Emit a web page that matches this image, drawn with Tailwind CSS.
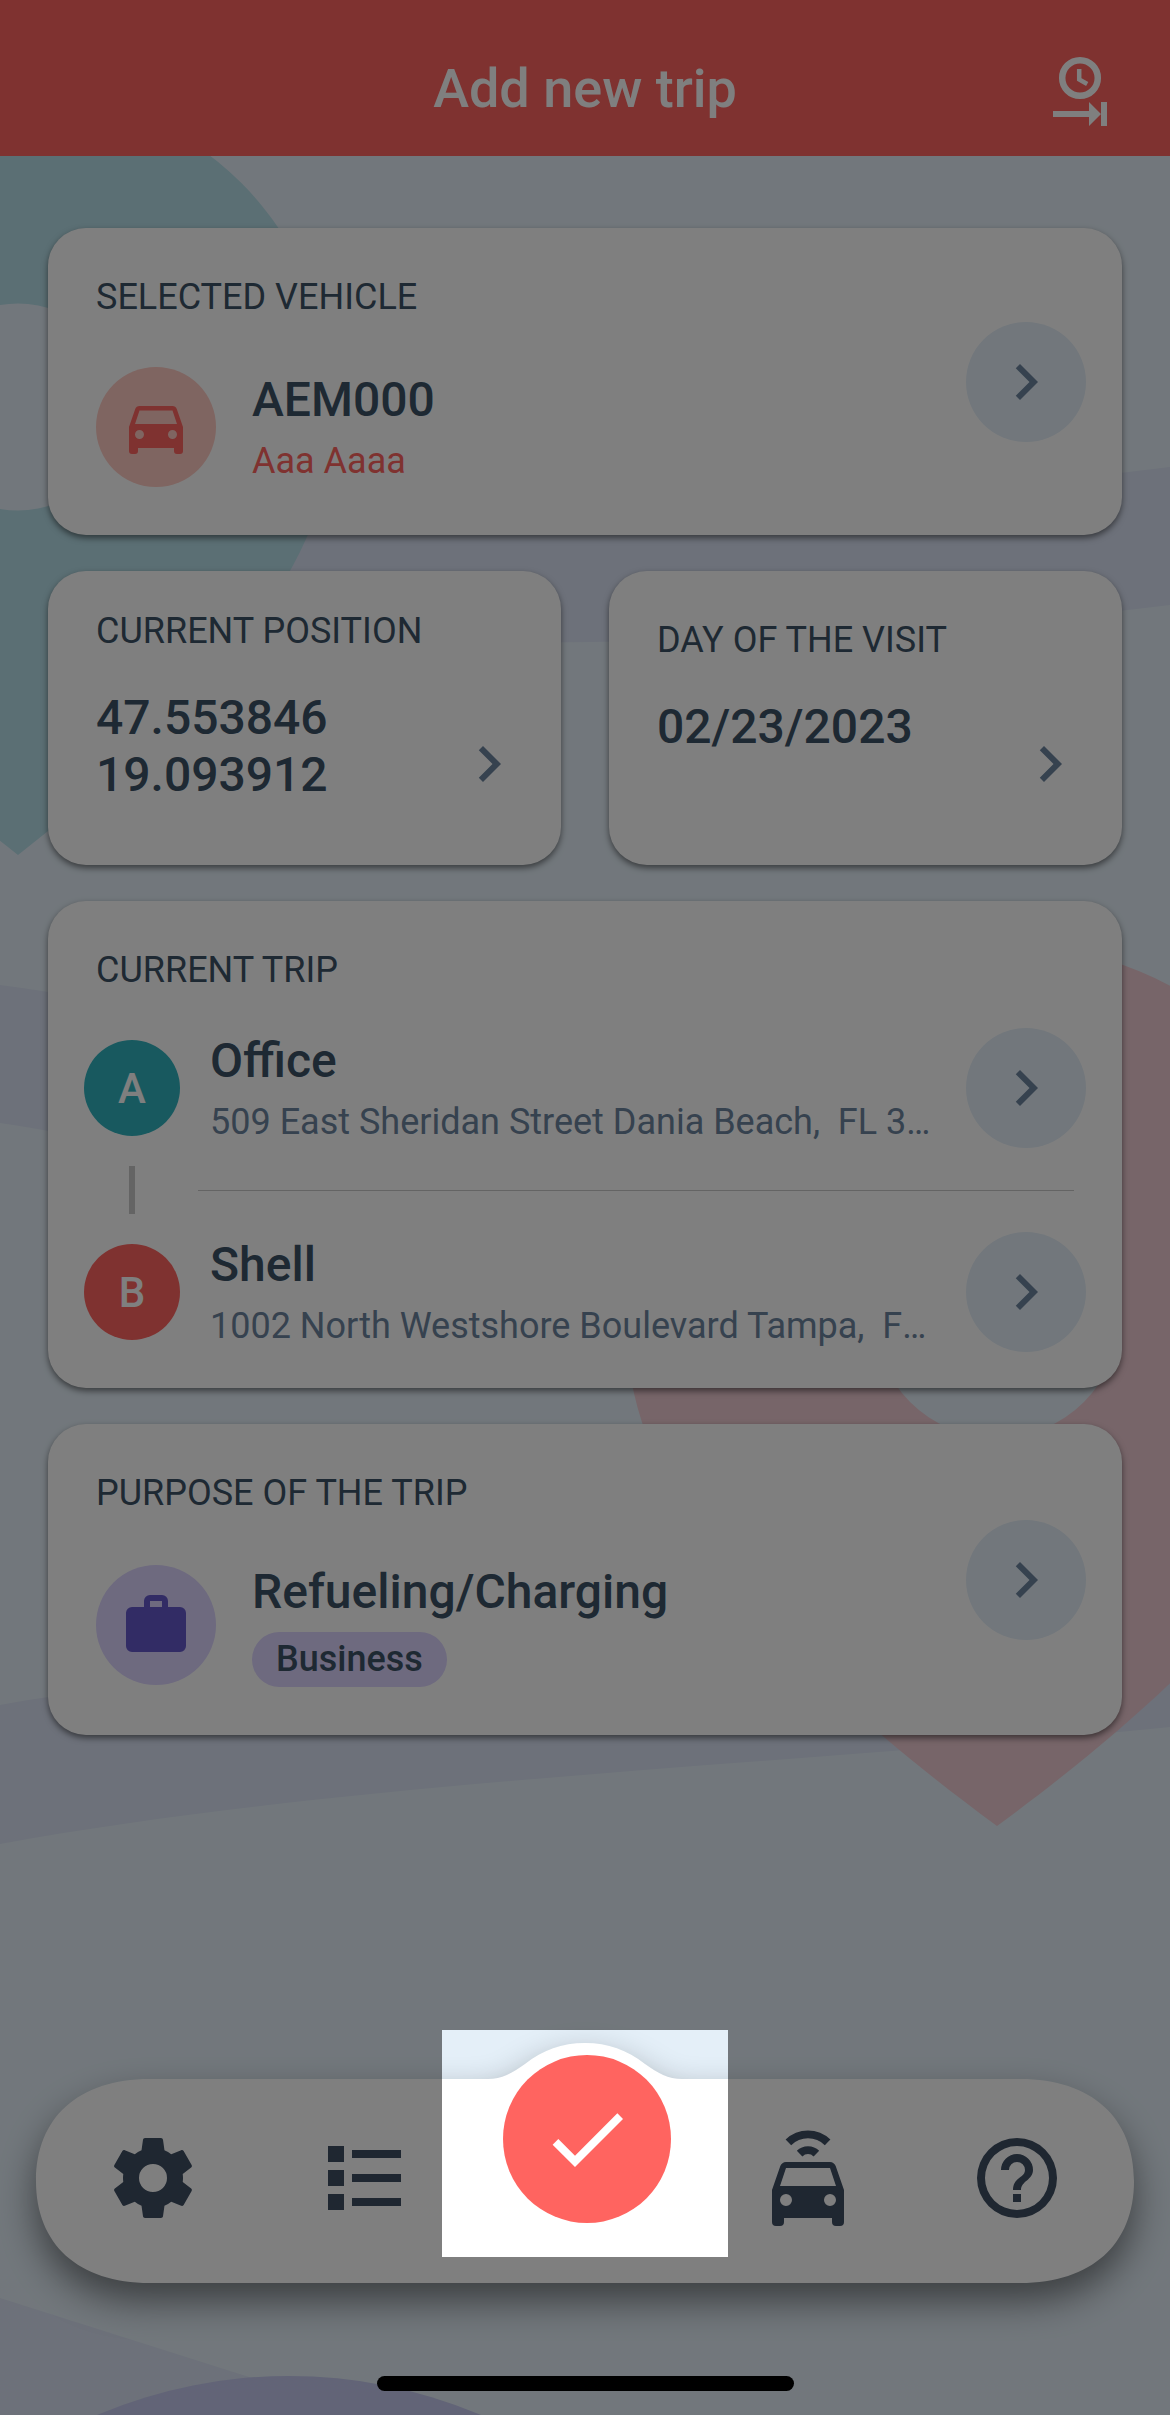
<!DOCTYPE html>
<html lang="en">
<head>
  <meta charset="UTF-8" />
  <title>Add new trip</title>
  <meta name="viewport" content="width=device-width, initial-scale=1.0" />
  <script src="https://cdn.jsdelivr.net/npm/@tailwindcss/browser@4"></script>
</head>

<body class="font-['Roboto',sans-serif] text-[#3c5266]">
  <!-- Shared icons -->
  <svg class="hidden">
    <symbol id="chevron" viewBox="0 0 24 24"><path d="M8.59 16.59 13.17 12 8.59 7.41 10 6l6 6-6 6z" /></symbol>
    <symbol id="car" viewBox="0 0 24 24"><path d="M5 11 6.5 6.5h11L19 11M17.5 16a1.5 1.5 0 1 1 0-3 1.5 1.5 0 0 1 0 3m-11 0a1.5 1.5 0 1 1 0-3 1.5 1.5 0 0 1 0 3M18.92 6c-.2-.58-.76-1-1.42-1h-11c-.66 0-1.22.42-1.42 1L3 12v8a1 1 0 0 0 1 1h1a1 1 0 0 0 1-1v-1h12v1a1 1 0 0 0 1 1h1a1 1 0 0 0 1-1v-8z" fill-rule="evenodd" /></symbol>
  </svg>

  <div class="relative w-[1170px] h-[2415px] overflow-hidden bg-[#e4eff8] flex flex-col">
    <!-- Map pattern -->
    <svg class="absolute inset-0" width="1170" height="2415" viewBox="0 0 1170 2415">
      <g fill="#dae2f4">
        <path d="M250 520C560 530 900 500 1170 467V605C900 638 600 648 300 640Z" />
        <path d="M0 985C120 1000 240 1030 400 1080V1190C240 1180 120 1140 0 1123Z" />
        <path d="M0 1705C300 1650 800 1700 1170 1670V1727C800 1764 350 1780 0 1844Z" />
        <path d="M0 2298 249 2377 290 2415H0Z" />
      </g>
      <path fill="#b6dee8" fill-rule="evenodd" d="M-300 407A316 316 0 0 1 334 407C338 552 227 692 18 855C-191 692-300 552-300 407ZM18 303.500A103.500 103.500 0 1 0 18 510.500A103.500 103.500 0 1 0 18 303.500Z" />
      <path fill="#eecad2" fill-rule="evenodd" d="M625 1315A372 372 0 0 1 1369 1315C1369 1480 1250 1640 997 1826C744 1640 625 1480 625 1315ZM997 1192A123 123 0 1 0 997 1438A123 123 0 1 0 997 1192Z" />
      <circle cx="289" cy="2868" r="492" fill="#c4c8ee" />
    </svg>

    <!-- Header -->
    <header class="relative h-[156px] shrink-0 bg-[#ff6460] text-white">
      <h1 class="pt-[57px] text-center text-[54px] leading-[64px] font-medium">Add new trip</h1>
      <svg class="absolute right-[60px] top-[54px]" width="60" height="75" viewBox="0 0 60 75" fill="none">
        <circle cx="30" cy="24" r="17.800" stroke="#fff" stroke-width="6.500" />
        <path d="M29.200 15v10.500l8 4.500" stroke="#fff" stroke-width="4.500" />
        <path d="M3 57h36v-9l12 12-12 12v-9H3zM51 48h6v24h-6z" fill="#fff" />
      </svg>
    </header>

    <main class="relative mx-12 mt-[72px] flex flex-col gap-9">
      <!-- Vehicle -->
      <section class="h-[307px] rounded-[38px] bg-white pl-12 pr-9 shadow-[0_3px_6px_rgba(0,0,0,0.5)] flex items-center justify-between">
        <div class="h-full pt-12">
          <h2 class="text-[36px] leading-[42px]">SELECTED VEHICLE</h2>
          <div class="mt-[49px] flex items-center gap-9">
            <div class="size-[120px] rounded-full bg-[#ffcac2] text-[#ff6460] flex items-center justify-center">
              <svg class="size-[72px] fill-current"><use href="#car" /></svg>
            </div>
            <div class="flex flex-col gap-3">
              <p class="text-[48px] leading-[56px] font-medium">AEM000</p>
              <p class="text-[36px] leading-[42px] text-[#ff6460]">Aaa Aaaa</p>
            </div>
          </div>
        </div>
        <button class="size-[120px] rounded-full bg-[#e4eff8] text-[#6c849e] flex items-center justify-center">
          <svg class="size-[72px] fill-current"><use href="#chevron" /></svg>
        </button>
      </section>

      <!-- Position and day -->
      <div class="grid grid-cols-2 gap-12">
        <section class="h-[294px] rounded-[38px] bg-white pl-12 pr-9 pt-[39px] shadow-[0_3px_6px_rgba(0,0,0,0.5)] flex justify-between">
          <div class="whitespace-nowrap w-[300px]">
            <h2 class="text-[36px] leading-[42px]">CURRENT POSITION</h2>
            <p class="mt-[37px] text-[48px] leading-[57px] font-medium">47.553846<br />19.093912</p>
          </div>
          <svg class="size-[72px] self-end mb-[65px] shrink-0 fill-[#6c849e]"><use href="#chevron" /></svg>
        </section>
        <section class="h-[294px] rounded-[38px] bg-white pl-12 pr-9 pt-12 shadow-[0_3px_6px_rgba(0,0,0,0.5)] flex justify-between">
          <div class="whitespace-nowrap w-[300px]">
            <h2 class="text-[36px] leading-[42px]">DAY OF THE VISIT</h2>
            <p class="mt-[37px] text-[48px] leading-[57px] font-medium">02/23/2023</p>
          </div>
          <svg class="size-[72px] self-end mb-[65px] shrink-0 fill-[#6c849e]"><use href="#chevron" /></svg>
        </section>
      </div>

      <!-- Trip -->
      <section class="h-[487px] rounded-[38px] bg-white pl-9 pr-9 pt-12 shadow-[0_3px_6px_rgba(0,0,0,0.5)]">
        <h2 class="pl-3 text-[36px] leading-[42px]">CURRENT TRIP</h2>
        <div class="mt-[37px] h-[120px] flex items-center">
          <div class="size-24 rounded-full bg-[#30b2be] text-white text-[42px] font-medium flex items-center justify-center">A</div>
          <div class="ml-[30px] flex flex-1 flex-col gap-3">
            <p class="text-[48px] leading-[56px] font-medium">Office</p>
            <p class="text-[36px] leading-[42px] whitespace-pre text-[#6c849e]">509 East Sheridan Street Dania Beach,  FL 3…</p>
          </div>
          <button class="size-[120px] rounded-full bg-[#e4eff8] text-[#6c849e] flex items-center justify-center">
            <svg class="size-[72px] fill-current"><use href="#chevron" /></svg>
          </button>
        </div>
        <div class="h-[84px] flex items-center">
          <div class="ml-[45px] w-1.5 h-12 bg-[#c8c8c8]"></div>
          <div class="ml-[63px] mr-3 mt-px flex-1 h-px bg-[#c8c8c8]"></div>
        </div>
        <div class="h-[120px] flex items-center">
          <div class="size-24 rounded-full bg-[#ff6460] text-white text-[42px] font-medium flex items-center justify-center">B</div>
          <div class="ml-[30px] flex flex-1 flex-col gap-3">
            <p class="text-[48px] leading-[56px] font-medium">Shell</p>
            <p class="text-[36px] leading-[42px] whitespace-pre text-[#6c849e]">1002 North Westshore Boulevard Tampa,  F<span class="inline-block">…</span></p>
          </div>
          <button class="size-[120px] rounded-full bg-[#e4eff8] text-[#6c849e] flex items-center justify-center">
            <svg class="size-[72px] fill-current"><use href="#chevron" /></svg>
          </button>
        </div>
      </section>

      <!-- Purpose -->
      <section class="h-[311px] rounded-[38px] bg-white pl-12 pr-9 shadow-[0_3px_6px_rgba(0,0,0,0.5)] flex items-center justify-between">
        <div class="h-full pt-12">
          <h2 class="text-[36px] leading-[42px]">PURPOSE OF THE TRIP</h2>
          <div class="mt-[50px] flex items-start gap-9">
            <div class="mt-px size-[120px] rounded-full bg-[#dcd4ff] flex items-center justify-center">
              <svg class="size-[72px] fill-[#6458ca]" viewBox="0 0 24 24"><path d="M10 2h4a2 2 0 0 1 2 2v2h4a2 2 0 0 1 2 2v11a2 2 0 0 1-2 2H4a2 2 0 0 1-2-2V8a2 2 0 0 1 2-2h4V4a2 2 0 0 1 2-2m4 4V4h-4v2z" /></svg>
            </div>
            <div class="flex flex-col items-start gap-3">
              <p class="text-[48px] leading-[56px] font-medium">Refueling/Charging</p>
              <p class="h-[55px] rounded-full bg-[#dcd4ff] px-6 text-[36px] leading-[54px] font-medium">Business</p>
            </div>
          </div>
        </div>
        <button class="size-[120px] rounded-full bg-[#e4eff8] text-[#6c849e] flex items-center justify-center">
          <svg class="size-[72px] fill-current"><use href="#chevron" /></svg>
        </button>
      </section>
    </main>

    <!-- Tab bar -->
    <nav class="relative mt-[344px] mx-9 h-[204px] px-[69px] flex items-start justify-between text-[#3e4e62]">
      <svg class="absolute left-0 top-0 overflow-visible" width="1098" height="204" viewBox="36 2079 1098 204">
        <filter id="bar-shadow" x="-20%" y="-50%" width="140%" height="200%" color-interpolation-filters="sRGB">
          <feDropShadow dx="0" dy="18" stdDeviation="18" flood-color="#000" flood-opacity="0.47" />
        </filter>
        <path filter="url(#bar-shadow)" fill="#fff" d="M36 2181C36 2118 78 2079 150 2079H488C502 2079 512 2073 525 2064C543 2050 562 2043 585 2043S627 2050 645 2064C658 2073 668 2079 682 2079H1020C1092 2079 1134 2118 1134 2181S1092 2283 1020 2283H150C78 2283 36 2244 36 2181Z" />
      </svg>
      <div class="relative mt-[51px] flex gap-[116px]">
        <svg class="size-24 fill-current" viewBox="0 0 24 24"><path d="M12 15.500A3.500 3.500 0 0 1 8.500 12 3.500 3.500 0 0 1 12 8.500a3.500 3.500 0 0 1 3.500 3.500 3.500 3.500 0 0 1-3.500 3.500m7.430-2.530c.04-.32.07-.64.07-.97s-.03-.66-.07-1l2.110-1.630c.19-.15.24-.42.12-.64l-2-3.460c-.12-.22-.39-.31-.61-.22l-2.490 1c-.52-.39-1.060-.73-1.690-.98l-.37-2.650A.506.506 0 0 0 14 2h-4c-.25 0-.46.18-.5.42l-.37 2.650c-.63.25-1.170.59-1.690.98l-2.490-1c-.22-.09-.49 0-.61.22l-2 3.460c-.13.22-.07.49.12.64L4.570 11c-.04.34-.07.67-.07 1s.03.65.07.97l-2.110 1.660c-.19.15-.25.42-.12.64l2 3.460c.12.22.39.3.61.22l2.490-1.010c.52.4 1.060.74 1.690.99l.37 2.650c.04.24.25.42.5.42h4c.25 0 .46-.18.5-.42l.37-2.650c.63-.26 1.170-.59 1.690-.99l2.490 1.010c.22.08.49 0 .61-.22l2-3.460c.12-.22.07-.49-.12-.64z" /></svg>
        <svg class="size-24 fill-current" viewBox="0 0 96 96"><path d="M11 16h16v16H11zM11 40h16v16H11zM11 64h16v16H11zM35 20h49v8H35zM35 44h49v8H35zM35 68h49v8H35z" /></svg>
      </div>
      <button class="relative -mt-6 size-[168px] rounded-full bg-[#ff6460] flex items-center justify-center">
        <svg class="size-24 fill-white" viewBox="0 0 24 24"><path d="M9 16.170 4.830 12l-1.420 1.410L9 19 21 7l-1.410-1.410z" /></svg>
      </button>
      <div class="relative mt-[51px] flex gap-[113px]">
        <svg class="size-24 overflow-visible fill-current" viewBox="0 0 24 24">
          <use href="#car" y="3" width="24" height="24" />
          <path d="M6.400 2.400A8 8 0 0 1 17.600 2.400L16.200 3.800A6 6 0 0 0 7.800 3.800ZM9.200 5.200A4 4 0 0 1 14.800 5.200L13.400 6.600A2 2 0 0 0 10.600 6.600Z" />
        </svg>
        <svg class="size-24 fill-current" viewBox="0 0 24 24"><path d="M11 18h2v-2h-2zm1-16a10 10 0 1 0 0 20 10 10 0 0 0 0-20m0 18a8 8 0 1 1 0-16 8 8 0 0 1 0 16m0-14a4 4 0 0 0-4 4h2a2 2 0 1 1 4 0c0 2-3 1.750-3 5h2c0-2.250 3-2.500 3-5a4 4 0 0 0-4-4" /></svg>
      </div>
    </nav>

    <!-- Dim everything but the confirm button -->
    <div class="absolute left-[442px] top-[2030px] w-[286px] h-[227px] shadow-[0_0_0_2400px_rgba(0,0,0,0.5)]"></div>

    <!-- Home indicator -->
    <div class="absolute left-[377px] top-[2376px] w-[417px] h-[15px] rounded-full bg-black"></div>
  </div>
</body>
</html>
